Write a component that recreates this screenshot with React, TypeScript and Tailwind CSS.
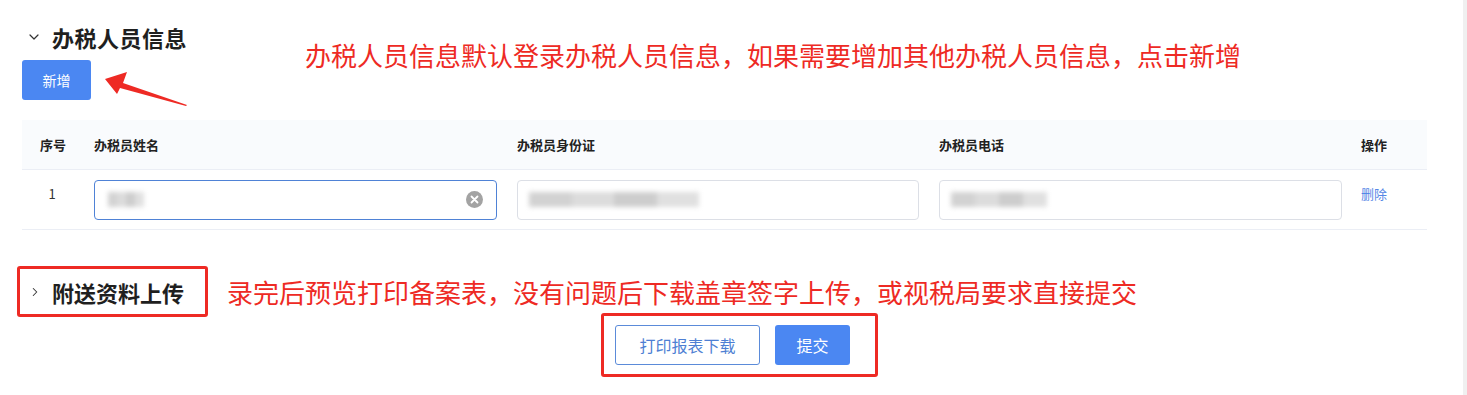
import { ChevronDown, ChevronRight } from "lucide-react";

const font = { fontFamily: '"Noto Sans CJK SC", "Noto Sans", sans-serif' };

const columns = ["办税员姓名", "办税员身份证", "办税员电话"];

function Blur({ width }: { width: number }) {
  // mosaic stand-in for the masked personal data
  return (
    <div className="flex h-[15px] blur-[2.5px]" style={{ width }}>
      <div className="h-full flex-1 bg-[#d2d2d2]" />
      <div className="h-full flex-1 bg-[#dcdcdc]" />
      <div className="h-full flex-1 bg-[#cdcdcd]" />
      <div className="h-full flex-1 bg-[#e0e0e0]" />
    </div>
  );
}

function TaxInput({ focused, blurWidth }: { focused?: boolean; blurWidth: number }) {
  return (
    <div
      className={
        focused
          ? "flex h-[40px] items-center rounded-[4px] border border-[#4f82d6] bg-white px-[13px]"
          : "flex h-[40px] items-center rounded-[4px] border border-[#dcdfe6] bg-white px-[11px]"
      }
    >
      <Blur width={blurWidth} />
      <div className="flex-1" />
      {focused && (
        <div className="flex h-[17px] w-[17px] items-center justify-center rounded-full bg-[#a3a3a3]">
          <svg width="9" height="9" viewBox="0 0 9 9">
            <path d="M1.5 1.5 L7.5 7.5 M7.5 1.5 L1.5 7.5" stroke="white" strokeWidth="1.8" strokeLinecap="round" />
          </svg>
        </div>
      )}
    </div>
  );
}

export default function App() {
  return (
    <div className="flex h-[395px] w-full bg-white text-[#1f1f1f]" style={font}>
      <div className="relative flex-1 pl-[22px] pr-[36px]">
        <div className="flex h-[26px] items-center mt-[24px]">
          <ChevronDown size={16} strokeWidth={1.8} className="ml-[4px] text-[#333]" />
          <span className="ml-[10px] text-[22px] font-bold leading-none tracking-[0.5px]">办税人员信息</span>
        </div>

        <button className="mt-[10px] h-[40px] w-[69px] rounded-[3px] bg-[#4b87f2] text-[14px] text-white">新增</button>

        <div className="absolute left-[305px] top-[38px] text-[26px] leading-[34px] text-[#ee2a24]">
          办税人员信息默认登录办税人员信息，如果需要增加其他办税人员信息，点击新增
        </div>
        <svg className="absolute left-[100px] top-[70px]" width="92" height="40" viewBox="0 0 92 40">
          <polygon points="5,9 27,2 23,13 87,35 86,36 20,18 17,24" fill="#ee2a24" />
        </svg>

        <div className="mt-[20px] text-[13px]">
          <div className="grid h-[50px] grid-cols-[60px_423px_422px_422px_1fr] items-center border-b border-[#ebeef5] bg-[#f9fbfd] font-bold text-[#222]">
            <div className="text-center pl-[2px]">序号</div>
            {columns.map((c) => (
              <div key={c} className="pl-[12px]">{c}</div>
            ))}
            <div className="pl-[12px]">操作</div>
          </div>
          <div className="grid h-[60px] grid-cols-[60px_423px_422px_422px_1fr] items-center border-b border-[#ebeef5]">
            <div className="text-center pb-[12px] text-[#333]">1</div>
            <div className="pl-[12px] pr-[8px]"><TaxInput focused blurWidth={36} /></div>
            <div className="pl-[12px] pr-[8px]"><TaxInput blurWidth={170} /></div>
            <div className="pl-[12px] pr-[7px]"><TaxInput blurWidth={96} /></div>
            <div className="pl-[12px] pb-[12px] text-[#5587e6]">删除</div>
          </div>
        </div>

        <div className="mt-[36px] flex items-center">
          <div className="-ml-[5px] flex h-[51px] w-[191px] items-center rounded-[3px] border-[3px] border-[#ee2a24]">
            <ChevronRight size={14} strokeWidth={1.8} className="ml-[8px] text-[#333]" />
            <span className="ml-[10px] text-[22px] font-bold leading-none">附送资料上传</span>
          </div>
          <div className="ml-[19px] text-[26px] leading-[34px] text-[#ee2a24]">
            录完后预览打印备案表，没有问题后下载盖章签字上传，或视税局要求直接提交
          </div>
        </div>

        <div className="-mt-[4px] flex pl-[579px]">
          <div className="flex h-[64px] w-[277px] items-center gap-[15px] rounded-[3px] border-[3px] border-[#ee2a24] pl-[11px]">
            <button className="h-[40px] w-[145px] rounded-[3px] border border-[#5b8bd9] bg-white text-[16px] text-[#4e7fd3]">打印报表下载</button>
            <button className="h-[40px] w-[75px] rounded-[3px] bg-[#4b87f2] text-[16px] text-white">提交</button>
          </div>
        </div>
      </div>
      <div className="h-full w-[4px] bg-[#f0f0f0]" />
    </div>
  );
}
